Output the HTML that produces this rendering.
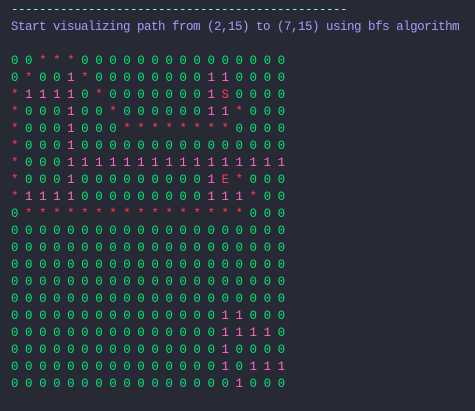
<!DOCTYPE html>
<html><head><meta charset="utf-8"><style>
html,body{margin:0;padding:0;background:#272935;width:475px;height:411px;overflow:hidden}
pre{margin:0;position:absolute;left:11px;top:2px;font-family:"Liberation Mono",monospace;font-size:12.5px;letter-spacing:-0.5px;line-height:17px;color:#00e676}
.d{color:#8be9fd}.t{color:#a59cff}.g{color:#00e676}.p{color:#ff6ac1}.r{color:#ff3b4e}
</style></head><body><pre id="o"><span class="d">------------------------------------------------</span>
<span class="t">Start visualizing path from (2,15) to (7,15) using bfs algorithm</span>

</pre>
<script>
var rows=[
"00***000000000000000",
"0*001*00000000110000",
"*11110*00000001S0000",
"*000100*00000011*000",
"*0001000********0000",
"*0001000000000000000",
"*0001111111111111111",
"*00010000000001E*000",
"*1111000000000111*00",
"0****************000",
"00000000000000000000",
"00000000000000000000",
"00000000000000000000",
"00000000000000000000",
"00000000000000000000",
"00000000000000011000",
"00000000000000011110",
"00000000000000010000",
"00000000000000010111",
"00000000000000001000"];
var h="";
rows.forEach(function(r){var s="";for(var i=0;i<r.length;i++){var c=r[i],cl=c=="0"?"g":c=="1"?"p":"r";s+='<span class="'+cl+'">'+c+'</span>'+(i<r.length-1?" ":"");}h+=s+"\n";});
document.getElementById("o").innerHTML+=h;
</script>
</body></html>
